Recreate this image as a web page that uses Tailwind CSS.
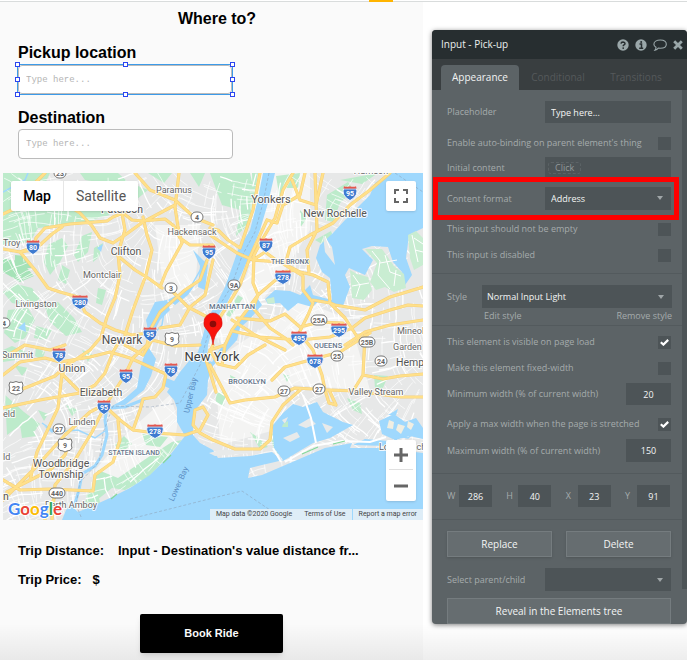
<!DOCTYPE html>
<html lang="en">
  <head>
    <meta charset="UTF-8" />
    <meta name="viewport" content="width=device-width, initial-scale=1.0" />
    <title>Where to?</title>
    <script src="https://cdn.jsdelivr.net/npm/@tailwindcss/browser@4"></script>
  </head>
  <body class="min-h-screen bg-white font-['Liberation_Sans',sans-serif] text-black">
    <div class="relative flex min-h-screen items-start gap-[9px] overflow-hidden">
      <!-- page line and active tab marker -->
      <div class="absolute inset-x-0 top-px h-px bg-[#d9dcdc]"></div>
      <div class="absolute top-0 left-[369px] h-[2px] w-6 bg-[#ffb400]"></div>

      <!-- Ride page -->
      <main class="mt-[2px] min-h-[658px] min-w-0 flex-1 self-stretch bg-[#fafafa]">
        <h1 class="pt-[5px] pl-[11px] text-center text-base leading-6 font-bold">Where to?</h1>

        <div class="px-[18px] pt-3">
          <label for="pickup" class="block text-base leading-5 font-bold">Pickup location</label>
          <div class="relative -ml-px mt-px h-[31px] w-[216px] border border-[#3d9be9]">
            <input id="pickup" type="text" placeholder="Type here..." class="block h-full w-full rounded border border-[#bbb] bg-white px-[7px] font-['Liberation_Mono',monospace] text-[9px] placeholder:text-[#b4b4b4] outline-none" />
            <!-- resize handles -->
            <i class="absolute -top-[3px] -left-[3px] size-[5px] border border-[#2c45f0] bg-white"></i>
            <i class="absolute -top-[3px] left-1/2 -ml-[2px] size-[5px] border border-[#2c45f0] bg-white"></i>
            <i class="absolute -top-[3px] -right-[3px] size-[5px] border border-[#2c45f0] bg-white"></i>
            <i class="absolute top-3 -left-[3px] size-[5px] border border-[#2c45f0] bg-white"></i>
            <i class="absolute top-3 -right-[3px] size-[5px] border border-[#2c45f0] bg-white"></i>
            <i class="absolute -bottom-[3px] -left-[3px] size-[5px] border border-[#2c45f0] bg-white"></i>
            <i class="absolute -bottom-[3px] left-1/2 -ml-[2px] size-[5px] border border-[#2c45f0] bg-white"></i>
            <i class="absolute -right-[3px] -bottom-[3px] size-[5px] border border-[#2c45f0] bg-white"></i>
          </div>
          <label for="destination" class="mt-[13px] block text-base leading-5 font-bold">Destination</label>
          <input id="destination" type="text" placeholder="Type here..." class="mt-px block h-[30px] w-[215px] rounded border border-[#bbb] bg-white px-[7px] font-['Liberation_Mono',monospace] text-[9px] placeholder:text-[#b4b4b4] outline-none" />
        </div>

        <!-- Map -->
        <section class="relative mt-[14px] ml-[3px] h-[347px] overflow-hidden bg-[#e8e8e8]">
          <svg class="block h-full w-full" viewBox="3 173 420 347" preserveAspectRatio="xMidYMid slice" role="img" aria-label="Map of New York">
            <defs>
              <g id="interstate">
                <path d="M-6-6Q-3-5 0-6Q3-5 6-6Q9.500 2.500 0 7.500Q-9.500 2.500-6-6Z" fill="#3f7bd0" stroke="#fff" stroke-width=".8" />
                <path d="M-6-6.800Q-3-5.600 0-6.800Q3-5.600 6-6.800L6.700-4.200H-6.700Z" fill="#e4574e" />
                <path d="M-6.900-3.900H6.900" stroke="#fff" stroke-width=".6" />
              </g>
              <path id="usroute" d="M-6-6L-3-5.500L0-6.500L3-5.500L6-6L7-3Q5.500 0 7 3Q6 6 2 6L0 7L-2 6Q-6 6-7 3Q-5.500 0-7-3Z" fill="#fff" stroke="#777" stroke-width="1" />
              <path id="roads" fill="none" stroke-linejoin="round" stroke-linecap="round" d="
                M3 249L20 252L33 250L36 238L45 228L70 224L95 222L107 221L113 217L123 213L132 220L142 221L165 219L174 226L180 238L190 245L213 245
                M20 252L40 245L52 234L62 227
                M20 252L35 270L48 288L60 292L78 297L85 312L100 323L115 330L132 335L148 333
                M179 173L175 207L178 227L182 243L166 272L160 287
                M122 213L125 230L118 253L120 275L115 298L107 317L101 337L90 350L72 362L62 374L58 408L50 425L37 452L30 480
                M143 217L147 235L152 250L146 275L133 310L125 335
                M175 205L160 213L143 222L125 235L113 243L100 238L92 226L80 213L72 208
                M209 255L200 280L185 290L160 312L150 330L147 345L133 358L125 375L112 395L104 408L92 432L75 460L55 485L52 519
                M213 260L205 295L190 307L180 325L160 328
                M118 256L135 270L148 278L162 288M168 287L188 307L213 320
                M3 214L14 209L28 205M45 173L36 182M135 173L150 190L175 200L195 218L213 225
                M3 375L20 362L45 358L60 362L90 357L110 352L130 358L150 367L166 374L163 388L155 397L143 399L140 410L133 430
                M3 358L25 345L50 350L65 345
                M3 408L40 400L80 393L95 385L105 373L113 352L120 340
                M3 480L20 490L50 489L93 491L95 475L113 462L120 440L118 420
                M107 408L120 420L133 430L155 433L185 435L200 430L208 415L203 407L195 410L193 425L200 433L213 440
                M3 500L35 468L65 435L90 412L104 405M7 492L50 470L65 455L70 440
                M57 492L45 519M20 390L55 376L70 362M60 372L78 390L98 395
                M125 345L143 355L152 340L175 346L200 345
                M260 173L253 210L240 248L228 240L218 230L210 228
                M210 235L228 247L237 253L253 260L280 262L300 272L313 275L328 282L330 303L345 318L358 338
                M293 173L283 190L275 218L262 240L254 255L253 283L258 295L247 310L232 330L225 345L210 350
                M267 220L277 223L283 205L300 195L305 173M267 220L250 257L240 285L228 305L215 325
                M315 173L317 230L307 250L309 272
                M292 180L300 200L316 205L323 173
                M390 173L370 190L350 205L333 223L310 235L290 247L285 265L303 276L303 290L313 303L308 315L298 335
                M253 260L265 252L276 260M258 295L285 272L295 270
                M313 300L330 303L335 305L365 310L390 297L423 287
                M232 331L260 337L300 340L330 337L352 328L365 318L390 310L408 305L423 306
                M237 318L270 321L285 314L300 327L320 322L343 323
                M345 345L365 332L390 325L423 320
                M258 295L253 308L270 328L285 338L293 345M232 320L255 335L285 350
                M210 365L230 403L245 400L275 397L295 388L330 390L355 391L400 397L423 397
                M300 390L283 405L272 422L270 440L260 449L235 449L213 440
                M325 390L329 403L336 405L330 392M313 350L305 340M313 350L322 375L325 390
                M365 335L363 375L353 391M363 375L383 379L400 376L423 374
                M210 350L218 364L235 368L248 355L265 345M272 380L285 367L310 360L340 352L370 333
                M213 345L206 360L210 372L216 392M225 345L222 365" />
            </defs>

            <rect x="3" y="173" width="420" height="347" fill="#e7e8e8" />
            <!-- dense built-up areas -->
            <path fill="#f4f4f3" d="M225 173H310L310 230L285 270L255 310L225 350L215 330L245 280L262 230ZM215 360L260 330L300 300L350 320L370 390L290 385L275 430L220 445ZM155 225L200 225L195 290L165 300ZM130 430L170 395L178 420L175 440L100 495L95 470Z" />
            <!-- parks -->
            <g fill="#bdebcb">
              <path d="M3 173H50L42 190L55 205L80 210L95 221L60 226L38 228L30 242L3 245Z" />
              <path d="M3 258L22 262L34 276L20 282L3 272ZM15 255L25 256L32 268L15 268Z" fill="#a5e2b7" />
              <path d="M48 245L62 238L68 246L60 262L50 275L44 262ZM80 210L100 205L110 215L88 221ZM82 236L92 232L88 252L78 262L74 255ZM94 248L103 243L99 257L93 262ZM3 292L16 284L32 288L40 299L28 306L12 303ZM8 310L28 308L35 320L25 338L15 343L4 333ZM44 304L58 302L74 318L82 332L66 336L50 322ZM36 326L52 330L46 340L34 338ZM62 265L70 270L66 284L58 280ZM98 288L106 290L102 305L96 303Z" />
              <path d="M80 173H118L128 182L148 190L136 200L120 187L98 182L85 180ZM148 173H172L164 183ZM190 173H205L199 187ZM210 173H250L255 195L248 225L236 236L240 210L222 205ZM252 173H258L253 205Z" />
              <path d="M276 176L300 173L298 188L285 188L280 200ZM327 195L348 182L354 190L340 203L333 222L325 220ZM300 210L307 218L300 228ZM340 180L378 173L362 184ZM315 240L331 231L335 242L322 244Z" />
              <path d="M3 350L12 346L26 352L16 360L3 362ZM5 395L24 412L40 424L34 432L18 427L7 435ZM20 424L32 424L36 436L22 438ZM36 348L45 352L42 360L35 356ZM38 410L48 414L44 421ZM82 350L92 354L88 362ZM14 365L28 368L22 376ZM66 405L78 410L72 416Z" />
              <path d="M98 470L118 478L150 456L172 442L182 440L148 478L125 490L112 488L97 500L82 510ZM115 445L124 436L132 444L121 453ZM86 494L98 492L100 503L87 508ZM142 434L168 437L160 447L146 445Z" />
              <path d="M250 432L259 438L268 447L260 449ZM270 434L281 433L283 452L275 454ZM216 393L226 392L224 406L216 402ZM230 375L236 378L232 385ZM283 374L290 376L287 382ZM374 375L388 376L382 390L375 388ZM347 398L360 403L362 414L353 410ZM238 295L243 298L230 317L226 315Z" />
            </g>
            <g id="streets" fill="none" stroke="#fff" stroke-linecap="round"></g>

            <!-- water -->
            <g fill="#9fd8fd">
              <path d="M263 173L257 203L250 230L238 250L230 273L225 287L217 303L208 317L203 335L198 352L189 361L180 372L167 392L174 400L177 408L177 422L185 436L170 455L150 475L130 488L110 498L90 507L78 512L71 505L66 510L62 520H423V453L400 450L386 448L350 448L352 443L325 448L290 463L262 475L248 478L250 468L262 465L275 462L283 460L274 448L273 435L273 425L283 413L293 404L303 407L317 402L323 412L343 422L353 425L330 438L313 443L298 452L283 461L272 452L250 456L218 458L213 450L200 443L193 435L193 425L197 408L207 395L208 380L213 366L222 356L237 340L240 328L250 319L262 305L258 299L250 305L240 318L230 335L218 352L212 362L207 360L208 345L212 330L217 317L227 303L235 287L242 273L252 250L260 230L268 203L275 173Z" />
              <path d="M390 173L375 183L370 195L360 205L345 220L333 233L320 245L316 258L322 272L330 278L332 300L313 295L310 285L300 295L290 291L275 290L265 299L268 304L280 303L288 311L298 303L312 307L320 300L343 306L347 295L350 287L345 275L349 268L365 275L373 260L362 249L372 246L388 247L393 262L402 272L405 285L412 275L406 258L409 235L415 232L423 228V173Z" />
              <path d="M147 345L156 359L151 376L144 390L125 405L112 406L123 400L137 388L140 370ZM150 340L146 320L155 302L167 300L170 310L160 320ZM168 300L182 292L195 285L188 295L175 305ZM193 250L208 265L205 290L198 287L200 266ZM166 378L182 384L178 392L164 386Z" />
              <path d="M379 421L394 414L405 422L416 418L423 428V439L410 436L395 440L382 434ZM353 445L365 439L388 441L385 446Z" />
              <path d="M18 328L25 322L26 332ZM97 248L103 244L101 252ZM44 426L55 430L52 433ZM388 415L398 409L396 415Z" />
            </g>
            <!-- islands and sand bars -->
            <g fill="#e8eaea">
              <path d="M209 453L220 450L252 450L252 453L215 456ZM282 420L288 417L285 424ZM298 425L310 418L316 424L306 428ZM322 423L333 427L327 433ZM283 438L297 432L300 437L290 442ZM323 235L332 247L335 265L325 252Z" />
              <path d="M283 424L288 421L288 427L282 427Z" fill="#bfebcd" />
              <path d="M365 249L382 249L394 266L404 274L406 288L394 292L385 287L376 290L370 282L377 263ZM408 235L416 231L423 238V265L414 270L410 258ZM350 270L357 274L368 277L372 290L364 300L352 298ZM266 299L274 297L275 303L268 304Z" fill="#c9edd2" />
              <path d="M389 420L394 422L393 429L387 428ZM398 424L405 426L401 434L396 430ZM408 421L414 424L411 430L407 427Z" fill="#f0eee2" />
            </g>
            <g fill="none" stroke="#fff" stroke-width="1">
              <path d="M372 251L380 261L378 275L390 289M385 255L390 272L401 276M380 263L397 260M353 275L360 285L356 297M352 286L369 283M414 238L423 244M415 250L423 252M412 235L418 262M325 236L330 248M394 286L396 270" />
              <path d="M303 395L311 418L316 443M273 448L281 462M285 462L313 446L342 441L370 442L386 437" stroke-width="2" />
            </g>
            <!-- kills and creeks -->
            <path fill="none" stroke="#9fd8fd" stroke-width="3" d="M145 399L125 407L107 408L105 420L107 435L102 455L95 466L82 474L79 490L74 507" />
            <path fill="none" stroke="#9fd8fd" stroke-width="1.500" d="M42 423L55 432L78 430L95 438L105 431M148 340L162 325L165 305L190 288L206 260M153 341L148 330M3 192L25 180L28 173M395 445L397 436L408 438L415 432" />
            <!-- county and state lines -->
            <path fill="none" stroke="#8a9caf" stroke-width=".7" stroke-dasharray="3 2" opacity=".7" d="M269 173L263 203L255 232L242 256L231 287L213 316L205 345L200 365L180 403L150 407L113 406L103 433L99 462L80 482L76 505L82 519M130 519L213 498L242 491L270 510M395 173L423 192" />
            <path stroke="#84d99a" stroke-width="1.200" fill="none" d="M302 454L318 447M333 444L345 441M111 499L117 494M163 463L171 455" />

            <use href="#roads" stroke="#f6d07a" stroke-width="3.200" />
            <use href="#roads" stroke="#ffe08a" stroke-width="2.200" />

            <!-- route shields -->
            <g id="shields" font-family="Roboto, sans-serif" font-weight="700" font-size="7" text-anchor="middle"></g>

            <!-- place names -->
            <g font-family="Roboto, sans-serif" fill="#666" stroke="#fff" stroke-opacity=".85" stroke-width="2" stroke-linejoin="round" paint-order="stroke" text-anchor="middle" font-size="9">
              <text x="174" y="193">Paramus</text>
              <text x="192" y="235">Hackensack</text>
              <text x="102" y="278">Montclair</text>
              <text x="36" y="307">Livingston</text>
              <text x="3" y="246" text-anchor="start">Troy</text>
              <text x="2" y="358" text-anchor="start">Summit</text>
              <text x="82" y="425">Linden</text>
              <text x="3" y="417" text-anchor="start">eld</text>
              <text x="3" y="460" text-anchor="start">ld</text>
              <text x="71" y="508">Perth Amboy</text>
              <text x="376" y="395">Valley Stream</text>
              <text x="397" y="334" text-anchor="start">Mineola</text>
              <text x="393" y="350" text-anchor="start">Garden</text>
              <text x="371" y="174">Harrison</text>
              <text x="379" y="450" text-anchor="start">Long Beach</text>
              <g font-size="10.500" fill="#555">
                <text x="122" y="213">Paterson</text>
                <text x="126" y="255">Clifton</text>
                <text x="72" y="372">Union</text>
                <text x="101" y="396">Elizabeth</text>
                <text x="61" y="467">Woodbridge</text>
                <text x="61" y="478">Township</text>
                <text x="3" y="500" text-anchor="start">n</text>
                <text x="271" y="203" font-size="11">Yonkers</text>
                <text x="335" y="217">New Rochelle</text>
                <text x="396" y="366" text-anchor="start">Hempstead</text>
              </g>
              <text x="122" y="344" font-size="12" fill="#505050">Newark</text>
              <text x="212" y="361" font-size="13" fill="#3d3d3d">New York</text>
              <g font-size="7.500" font-weight="500" fill="#65758a">
                <text x="290" y="264" font-size="7">THE BRONX</text>
                <text x="232" y="309">MANHATTAN</text>
                <text x="328" y="348">QUEENS</text>
                <text x="247" y="384">BROOKLYN</text>
                <text x="134" y="455" font-size="7">STATEN ISLAND</text>
              </g>
              <g font-size="8" fill="#5c8fc4" stroke="none">
                <text transform="translate(193 396) rotate(-77)">Upper Bay</text>
                <text transform="translate(181 485) rotate(-66)">Lower Bay</text>
              </g>
            </g>

            <!-- marker -->
            <path d="M213 345Q212 335 207 330Q203 326 204 322A9 9 0 0 1 222 322Q223 326 219 330Q214 335 213 345Z" fill="#f8130c" stroke="#d60f0a" stroke-width=".6" />
            <circle cx="213" cy="324" r="3.300" fill="#8a0b08" />

            <text x="8" y="515" font-family="Lato, sans-serif" font-size="17" font-weight="700" stroke="#fff" stroke-width="2" paint-order="stroke"><tspan fill="#4285f4">G</tspan><tspan fill="#ea4335">o</tspan><tspan fill="#fbbc05">o</tspan><tspan fill="#4285f4">g</tspan><tspan fill="#34a853">l</tspan><tspan fill="#ea4335">e</tspan></text>
          </svg>

          <div class="absolute top-2 left-2 flex h-[30px] rounded-[2px] bg-white font-['Roboto',sans-serif] text-sm shadow">
            <button type="button" class="w-[53px] border-r border-[#e6e6e6] font-medium">Map</button>
            <button type="button" class="w-[74px] text-[#565656]">Satellite</button>
          </div>
          <button type="button" aria-label="Full screen" class="absolute top-2 right-[7px] grid size-[30px] place-items-center rounded-[2px] bg-white shadow">
            <svg class="size-[14px]" viewBox="0 0 14 14" fill="none" stroke="#666" stroke-width="2"><path d="M1 5V1H5M9 1H13V5M13 9V13H9M5 13H1V9" /></svg>
          </button>
          <div class="absolute right-[7px] bottom-[19px] w-[30px] rounded-[2px] bg-white px-[3px] shadow">
            <button type="button" aria-label="Zoom in" class="grid h-[30px] w-full place-items-center border-b border-[#e0e0e0]">
              <svg class="size-[14px]" viewBox="0 0 14 14" stroke="#666" stroke-width="3"><path d="M7 0V14M0 7H14" /></svg>
            </button>
            <button type="button" aria-label="Zoom out" class="grid h-[31px] w-full place-items-center">
              <svg class="size-[14px]" viewBox="0 0 14 14" stroke="#666" stroke-width="3"><path d="M0 7H14" /></svg>
            </button>
          </div>
          <div class="absolute right-0 bottom-0 flex h-[11px] gap-px font-['Roboto',sans-serif] text-[7px] leading-[11px] whitespace-nowrap text-[#444]">
            <span class="flex gap-3 bg-[#e4eff6]/90 px-[6px]"><span>Map data ©2020 Google</span><a href="#">Terms of Use</a></span>
            <a href="#" class="bg-[#e4eff6]/90 px-[6px]">Report a map error</a>
          </div>
        </section>

        <div class="px-[18px] pt-[22px] text-[13px] leading-[18px] font-bold">
          <p class="flex gap-[14px] whitespace-nowrap"><span>Trip Distance:</span><span class="min-w-0 truncate">Input - Destination's value distance fr...</span></p>
          <p class="mt-[11px] flex gap-[11px]"><span>Trip Price:</span><span>$</span></p>
        </div>
        <div class="pt-[25px] text-center">
          <button type="button" class="h-[39px] w-[143px] rounded-[2px] bg-black text-[11px] font-bold text-white shadow-md">Book Ride</button>
        </div>
      </main>

      <!-- Property editor -->
      <aside class="mt-[30px] h-[594px] w-[255px] shrink-0 overflow-hidden rounded-[4px] bg-[#5c6366] font-['Open_Sans',sans-serif] text-[9px] text-[#a5abac] shadow-[0_1px_5px_rgba(0,0,0,0.5)]">
        <header class="flex h-[29px] items-center justify-between bg-[#272e30] pr-1 pl-[9px]">
          <h2 class="text-[10px] text-[#eceeee]">Input - Pick-up</h2>
          <div class="flex items-center gap-[6px] text-[#9aa7a9]">
            <button type="button" aria-label="Help"><svg class="block size-3" viewBox="0 0 12 12"><circle cx="6" cy="6" r="5.700" fill="currentColor" /><path d="M4 4.600Q4.200 2.900 6 2.900Q8 3 8 4.500Q8 5.400 7 5.900Q6.200 6.300 6.200 7.200" fill="none" stroke="#272e30" stroke-width="1.500" /><circle cx="6.200" cy="9.100" r=".9" fill="#272e30" /></svg></button>
            <button type="button" aria-label="Information"><svg class="block size-3" viewBox="0 0 12 12"><circle cx="6" cy="6" r="5.700" fill="currentColor" /><path d="M4.500 5H6.500V9M4.200 9.200H8.200" fill="none" stroke="#272e30" stroke-width="1.500" /><circle cx="6.200" cy="2.900" r="1" fill="#272e30" /></svg></button>
            <button type="button" aria-label="Comments"><svg class="block h-3 w-[14px]" viewBox="0 0 14 12" fill="none" stroke="currentColor" stroke-width="1.100"><path d="M7.300 1C10.900 1 13.300 2.800 13.300 5.200S10.900 9.300 7.300 9.300L5.300 9.100Q4 10.800 2 11.200Q3 10 3 8.300Q.9 7.200.9 5.200C.9 2.800 3.700 1 7.300 1Z" /></svg></button>
            <button type="button" aria-label="Close"><svg class="block size-[10px]" viewBox="0 0 10 10" stroke="currentColor" stroke-width="2.800"><path d="M1.200 1.200L8.800 8.800M8.800 1.200L1.200 8.800" /></svg></button>
          </div>
        </header>
        <nav class="flex h-[31px] items-end bg-[#393e40] pl-[9px] text-[10px] text-[#55595b]">
          <button type="button" class="h-[25px] w-[78px] rounded-t-[4px] bg-[#5c6366] text-[#f2f3f3]">Appearance</button>
          <button type="button" class="h-[25px] w-[78px]">Conditional</button>
          <button type="button" class="h-[25px] w-[78px]">Transitions</button>
        </nav>

        <div class="relative">
          <div class="absolute top-0 right-0 h-[499px] w-[5px] bg-[#4d5457]"></div>
          <div class="mr-[5px]">
            <div class="flex flex-col border-b border-[#535a5d] pt-[11px] pr-[11px] pb-[11px] pl-[15px]">
              <div class="flex h-[22px] items-center justify-between">
                <label for="placeholder">Placeholder</label>
                <input id="placeholder" type="text" value="Type here..." class="h-full w-[126px] bg-[#4d5457] px-[6px] text-[#f4f5f5]" />
              </div>
              <div class="mt-3 flex h-4 items-center justify-between">
                <label for="binding">Enable auto-binding on parent element's thing</label>
                <input id="binding" type="checkbox" class="size-[13px] appearance-none bg-[#4d5457]" />
              </div>
              <div class="mt-[6px] flex h-[22px] items-center justify-between">
                <span>Initial content</span>
                <div class="flex h-full w-[126px] items-center bg-[#4d5457] px-[3px]">
                  <button type="button" class="h-3 rounded-[3px] border border-dashed border-[#5c6366] px-[6px] leading-[10px] text-[#929899]">Click</button>
                </div>
              </div>
              <div class="relative mt-2 flex h-[23px] items-center justify-between">
                <label for="format">Content format</label>
                <div class="relative h-full w-[126px]">
                  <select id="format" class="h-full w-full appearance-none bg-[#4d5457] px-[6px] text-[#f4f5f5]"><option>Address</option></select>
                  <svg class="pointer-events-none absolute top-[9px] right-2 h-1 w-[6px]" viewBox="0 0 6 4"><path d="M0 0H6L3 4Z" fill="#a0a6a8" /></svg>
                </div>
                <!-- highlighted setting -->
                <div class="pointer-events-none absolute -top-[10px] -right-2 -bottom-[10px] -left-[14px] border-[5px] border-[#ff0000]"></div>
              </div>
              <div class="mt-3 flex h-[14px] items-center justify-between">
                <label for="notempty">This input should not be empty</label>
                <input id="notempty" type="checkbox" class="size-[13px] appearance-none bg-[#4d5457]" />
              </div>
              <div class="mt-3 flex h-[14px] items-center justify-between">
                <label for="disabled">This input is disabled</label>
                <input id="disabled" type="checkbox" class="size-[13px] appearance-none bg-[#4d5457]" />
              </div>
            </div>

            <div class="border-b border-[#535a5d] pt-[11px] pr-[10px] pb-[2px] pl-[15px]">
              <div class="flex h-[23px] items-center justify-between">
                <label for="style">Style</label>
                <div class="relative h-full w-[190px]">
                  <select id="style" class="h-full w-full appearance-none bg-[#4d5457] px-[5px] text-[#f4f5f5]"><option>Normal Input Light</option></select>
                  <svg class="pointer-events-none absolute top-[10px] right-2 h-1 w-[6px]" viewBox="0 0 6 4"><path d="M0 0H6L3 4Z" fill="#a0a6a8" /></svg>
                </div>
              </div>
              <div class="flex h-[15px] items-center justify-between pl-[37px]">
                <a href="#">Edit style</a>
                <a href="#">Remove style</a>
              </div>
            </div>

            <div class="border-b border-[#535a5d] pt-[9px] pr-[11px] pb-[11px] pl-[15px]">
              <div class="flex h-[14px] items-center justify-between">
                <label for="visible">This element is visible on page load</label>
                <span class="relative block size-[13px]">
                  <input id="visible" type="checkbox" checked class="block size-[13px] appearance-none bg-[#4d5457]" />
                  <svg class="pointer-events-none absolute top-[3px] left-[2px] h-[7px] w-[9px]" viewBox="0 0 9 7" fill="none" stroke="#fff" stroke-width="2.200"><path d="M.8 3.200L3.400 5.600L8.200.9" /></svg>
                </span>
              </div>
              <div class="mt-3 flex h-[14px] items-center justify-between">
                <label for="fixed">Make this element fixed-width</label>
                <input id="fixed" type="checkbox" class="size-[13px] appearance-none bg-[#4d5457]" />
              </div>
              <div class="mt-2 flex h-[22px] items-center justify-between">
                <label for="minwidth">Minimum width (% of current width)</label>
                <input id="minwidth" type="text" value="20" class="h-full w-[45px] bg-[#4d5457] text-center text-[#f4f5f5]" />
              </div>
              <div class="mt-3 flex h-[14px] items-center justify-between">
                <label for="maxon">Apply a max width when the page is stretched</label>
                <span class="relative block size-[13px]">
                  <input id="maxon" type="checkbox" checked class="block size-[13px] appearance-none bg-[#4d5457]" />
                  <svg class="pointer-events-none absolute top-[3px] left-[2px] h-[7px] w-[9px]" viewBox="0 0 9 7" fill="none" stroke="#fff" stroke-width="2.200"><path d="M.8 3.200L3.400 5.600L8.200.9" /></svg>
                </span>
              </div>
              <div class="mt-2 flex h-[23px] items-center justify-between">
                <label for="maxwidth">Maximum width (% of current width)</label>
                <input id="maxwidth" type="text" value="150" class="h-full w-[45px] bg-[#4d5457] text-center text-[#f4f5f5]" />
              </div>
            </div>

            <div class="flex justify-between border-b border-[#535a5d] pt-[11px] pr-3 pb-3 pl-[15px]">
              <div class="flex h-[22px] w-[45px] items-center justify-between"><label for="w">W</label><input id="w" type="text" value="286" class="h-full w-[33px] bg-[#4d5457] text-center text-[#f4f5f5]" /></div>
              <div class="flex h-[22px] w-[45px] items-center justify-between"><label for="h">H</label><input id="h" type="text" value="40" class="h-full w-[33px] bg-[#4d5457] text-center text-[#f4f5f5]" /></div>
              <div class="flex h-[22px] w-[45px] items-center justify-between"><label for="x">X</label><input id="x" type="text" value="23" class="h-full w-[33px] bg-[#4d5457] text-center text-[#f4f5f5]" /></div>
              <div class="flex h-[22px] w-[45px] items-center justify-between"><label for="y">Y</label><input id="y" type="text" value="91" class="h-full w-[33px] bg-[#4d5457] text-center text-[#f4f5f5]" /></div>
            </div>

            <div class="pt-[11px] pr-[11px] pl-[15px]">
              <div class="grid grid-cols-2 gap-[14px] text-[10px] text-[#f4f5f5]">
                <button type="button" class="h-[26px] border border-[#757c7f] bg-[#666d70] shadow-sm">Replace</button>
                <button type="button" class="h-[26px] border border-[#757c7f] bg-[#666d70] shadow-sm">Delete</button>
              </div>
              <div class="mt-[11px] flex h-[23px] items-center justify-between">
                <label for="parent">Select parent/child</label>
                <div class="relative h-full w-[126px]">
                  <select id="parent" class="h-full w-full appearance-none bg-[#4d5457] px-[6px] text-[#f4f5f5]"><option></option></select>
                  <svg class="pointer-events-none absolute top-[10px] right-2 h-1 w-[6px]" viewBox="0 0 6 4"><path d="M0 0H6L3 4Z" fill="#a0a6a8" /></svg>
                </div>
              </div>
              <button type="button" class="mt-[7px] h-[26px] w-full border border-[#757c7f] bg-[#666d70] text-[10px] text-[#f4f5f5]">Reveal in the Elements tree</button>
            </div>
          </div>
        </div>
      </aside>

      <div class="pointer-events-none absolute inset-x-0 bottom-0 h-9 bg-linear-to-b from-transparent to-black/7"></div>
    </div>

    <script>
      const NS = 'http://www.w3.org/2000/svg';

      // local streets: short lines that follow a slowly turning grid
      const streets = document.getElementById('streets');
      let seed = 11;
      const rand = () => (seed = (seed * 16807) % 2147483647) / 2147483647;
      const angle = (x, y) => 0.5 + Math.sin(x / 47) * 0.6 + Math.cos(y / 39 + x / 90) * 0.6;

      let minor = '';
      let major = '';
      for (let i = 0; i < 1300; i++) {
        let x = 3 + rand() * 420;
        let y = 173 + rand() * 347;
        const turn = rand() < 0.5 ? 0 : Math.PI / 2;
        const steps = 2 + Math.floor(rand() * 5);
        let d = 'M' + x.toFixed(1) + ' ' + y.toFixed(1);
        for (let s = 0; s < steps; s++) {
          const a = angle(x, y) + turn + (rand() - 0.5) * 0.3;
          x += Math.cos(a) * 6;
          y += Math.sin(a) * 6;
          d += 'L' + x.toFixed(1) + ' ' + y.toFixed(1);
        }
        if (i % 4 === 0) major += d;
        else minor += d;
      }
      [[minor, 0.7], [major, 1.3]].forEach(([d, width]) => {
        const path = document.createElementNS(NS, 'path');
        path.setAttribute('d', d);
        path.setAttribute('stroke-width', width);
        streets.appendChild(path);
      });

      // [kind, label, x, y]
      const routes = [
        ['i', '80', 33, 247], ['i', '95', 209, 252], ['i', '280', 80, 302], ['i', '95', 150, 334],
        ['i', '87', 266, 245], ['i', '95', 350, 193], ['i', '278', 283, 277], ['i', '495', 299, 338],
        ['i', '295', 339, 330], ['i', '78', 59, 355], ['i', '95', 126, 376], ['i', '78', 171, 370],
        ['i', '95', 104, 407], ['i', '278', 155, 431], ['i', '678', 315, 361],
        ['o', '4', 197, 217], ['o', '3', 171, 288], ['o', '9A', 234, 285], ['o', '25A', 319, 320],
        ['o', '25B', 367, 342], ['o', '25', 337, 356], ['o', '24', 381, 361], ['o', '27', 284, 391],
        ['o', '27', 319, 389], ['o', '27', 59, 429], ['o', '440', 57, 493], ['o', '4', 4, 323],
        ['o', '23', 60, 173],
        ['u', '9', 172, 339], ['u', '22', 16, 388], ['u', '9', 65, 445],
      ];
      const shields = document.getElementById('shields');
      routes.forEach(([kind, label, x, y]) => {
        const wide = label.length > 2;
        const g = document.createElementNS(NS, 'g');
        g.setAttribute('transform', `translate(${x} ${y})`);
        let shape;
        if (kind === 'o') {
          shape = document.createElementNS(NS, 'rect');
          const w = wide ? 16 : 12;
          shape.setAttribute('x', -w / 2);
          shape.setAttribute('y', -5);
          shape.setAttribute('width', w);
          shape.setAttribute('height', 10);
          shape.setAttribute('rx', 5);
          shape.setAttribute('fill', '#fff');
          shape.setAttribute('stroke', '#777');
        } else {
          shape = document.createElementNS(NS, 'use');
          shape.setAttribute('href', kind === 'i' ? '#interstate' : '#usroute');
          if (wide) shape.setAttribute('transform', 'scale(1.2 1)');
        }
        const text = document.createElementNS(NS, 'text');
        text.setAttribute('y', kind === 'i' ? 3 : 2.5);
        text.setAttribute('fill', kind === 'i' ? '#fff' : '#666');
        text.textContent = label;
        g.append(shape, text);
        shields.appendChild(g);
      });
    </script>
  </body>
</html>
